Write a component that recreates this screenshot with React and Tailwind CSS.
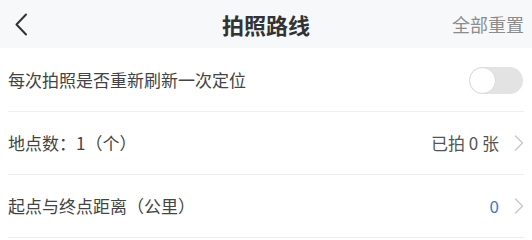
import React from "react";

function ChevronRight() {
  return (
    <svg width="10" height="16" viewBox="0 0 10 16" className="ml-[15px]">
      <polyline points="1.5,1 8.5,8 1.5,15" fill="none" stroke="#c9c9c9" strokeWidth="1.4" strokeLinecap="round" strokeLinejoin="round" />
    </svg>
  );
}

export default function App() {
  return (
    <div className="w-[532px] h-[240px] bg-white font-['Noto_Sans_CJK_SC','Noto_Sans',sans-serif] overflow-hidden">
      <div className="h-12 bg-[#f7f8fa] grid grid-cols-[1fr_auto_1fr] items-center px-2">
        <div className="flex items-center pl-[6px]">
          <svg width="14" height="23" viewBox="0 0 14 23">
            <polyline points="12,1.5 2.5,11.5 12,21.5" fill="none" stroke="#333333" strokeWidth="2" strokeLinecap="round" strokeLinejoin="round" />
          </svg>
        </div>
        <div className="text-[22px] font-bold text-[#333333] leading-none">拍照路线</div>
        <div className="flex justify-end text-[18px] text-[#8c8c8c] leading-none pr-[0px]">全部重置</div>
      </div>
      <div className="px-2">
        <div className="h-[64px] border-b border-[#eeeeee] flex items-center justify-between">
          <span className="text-[17px] text-[#444444]">每次拍照是否重新刷新一次定位</span>
          <div className="w-[54px] h-[27px] rounded-full bg-[#e3e3e3] flex items-center mr-[1px] mt-[1px]">
            <div className="w-[27px] h-[27px] rounded-full bg-white border border-[#d9d9d9]"></div>
          </div>
        </div>
        <div className="h-[63px] border-b border-[#eeeeee] flex items-center justify-between">
          <span className="text-[17px] text-[#444444]">地点数：1（个）</span>
          <div className="flex items-center">
            <span className="text-[17px] text-[#555555]">已拍 0 张</span>
            <ChevronRight />
          </div>
        </div>
        <div className="h-[63px] border-b border-[#eeeeee] flex items-center justify-between">
          <span className="text-[17px] text-[#444444]">起点与终点距离（公里）</span>
          <div className="flex items-center">
            <span className="text-[17px] text-[#3b78c9]">0</span>
            <ChevronRight />
          </div>
        </div>
      </div>
    </div>
  );
}
